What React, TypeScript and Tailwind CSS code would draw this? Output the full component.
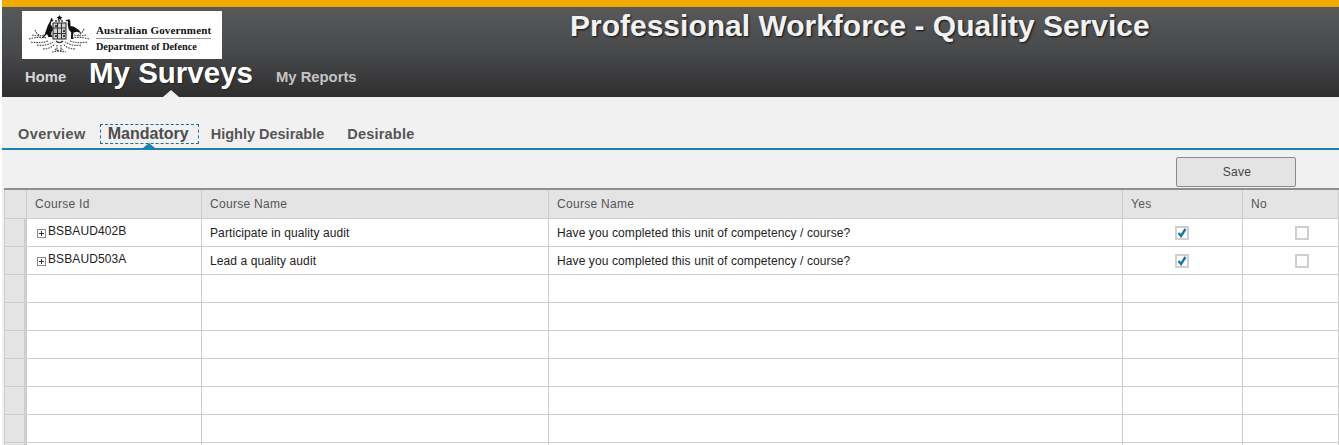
const font = "font-['Liberation_Sans',Arial,sans-serif]";

const rows = [
  { id: "BSBAUD402B", name: "Participate in quality audit", yes: true },
  { id: "BSBAUD503A", name: "Lead a quality audit", yes: true },
];
const emptyRows = [0, 1, 2, 3, 4, 5, 6];

function Crest() {
  return (
    <svg width="62" height="42" viewBox="0 0 62 42" className="shrink-0">
      <g fill="none" stroke="#444" strokeWidth="1.100" strokeDasharray="1.600 1">
        <path d="M1 25c6-2 12-2 18-1M4 21c4 1 8 1 12 0M7 16c1 3 3 5 6 6M3 28c6 1 11 1 17-1M9 31c6 1 11 0 16-3M15 35c5 0 9-2 12-5" />
        <path d="M61 25c-6-2-12-2-18-1M58 21c-4 1-8 1-12 0M56 15c-1 3-3 5-6 6M59 28c-6 1-11 1-17-1M53 31c-6 1-11 0-16-3M47 35c-5 0-9-2-12-5" />
        <path d="M24 38c4-1 10-1 14 0M27 35c2 2 6 2 8 0M29 31v6M33 31v6" />
      </g>
      <path d="M24 3.500l.6 2.200 1 1.300-2.200.6-.8 3 1.600 2.200 1 3-1.600 2-.4 2.700 1.600 2.500-4.400 0-1.400-3-3.500 3.500-2.500 1.200 3.500-4 1.500-4.200 2-5.500 2-3.500.8-2.500z" fill="#111" />
      <path d="M38.500 6l2.500-.8 1.200 1 .3 5.800 3.500.8 4.500 3 3 3.500-4.500-1.500-3.500.8-.8 5.400 1.200.9-3 0 .3-6.300-2.500-3-1-5.200.3-3.200-2.500-.3z" fill="#111" />
      <rect x="25" y="9" width="13" height="16" fill="#cfcfcf" stroke="#222" strokeWidth="1" />
      <path d="M25 14h13M25 19.500h13M29.500 9v16M33.500 9v16" stroke="#333" strokeWidth="1" />
      <path d="M27 12l2 0M35 17l2 0M27 22l2 0M35 22l2 0" stroke="#111" strokeWidth="1.500" />
      <path d="M31.500 1l1 1.800 1.800.4-1.300 1.200.3 1.800-1.800-.9-1.800.9.300-1.800-1.300-1.200 1.800-.4z" fill="#111" />
      <path d="M27 7h9" stroke="#333" strokeWidth="1.300" strokeDasharray="2 1" />
      <path d="M28 27c2 2 5 2 7 0" fill="none" stroke="#333" strokeWidth="1.500" />
    </svg>
  );
}

function Expander() {
  return (
    <svg width="9" height="9" viewBox="0 0 9 9" className="mt-[7px] shrink-0">
      <rect x="0.500" y="0.500" width="8" height="8" fill="#fff" stroke="#888" />
      <path d="M2 4.500h5M4.500 2v5" stroke="#333" />
    </svg>
  );
}

function Check({ checked }: { checked: boolean }) {
  return (
    <div className="flex size-[14px] items-center justify-center border-2 border-[#cfcfcf] bg-[#fdfdfd]">
      {checked && (
        <svg width="10" height="10" viewBox="0 0 10 10">
          <path d="M1.500 5l2.500 3 4.500-7" fill="none" stroke="#1f739f" strokeWidth="2.400" />
        </svg>
      )}
    </div>
  );
}

const cell = "border-r border-b border-[#cdcdcd]";
const rowGrid = "grid grid-cols-[23px_175px_347px_574px_120px_96px] h-[28px]";

export default function App() {
  return (
    <div className={`${font} h-[445px] w-[1339px] overflow-hidden bg-white pl-[2px]`}>
      <div className="h-[7px] bg-[#f0ab00]" />

      <header className="relative h-[90px] bg-gradient-to-b from-[#58595b] via-[#48494b] to-[#2f2f30] pt-[4px] pl-[20px]">
        <div className="flex h-[48px] w-[200px] items-center gap-[6px] bg-white pl-[6px]">
          <Crest />
          <div className="mt-[8px] font-['Liberation_Serif',serif] leading-none font-bold text-[#111]">
            <div className="border-b border-[#999] pb-[2px] text-[11px] tracking-[0.15px] whitespace-nowrap">Australian Government</div>
            <div className="pt-[3px] text-[10.200px] whitespace-nowrap">Department of Defence</div>
          </div>
        </div>
        <nav className="-mt-[1px] flex items-center pl-[3px] font-bold">
          <span className="w-[64px] pt-[8px] text-[14.800px] text-[#d6d6d6]">Home</span>
          <span className="w-[187px] text-[29.500px] leading-[30px] text-white [text-shadow:1px_1px_1px_#222]">My Surveys</span>
          <span className="pt-[8px] text-[14.800px] text-[#c4c4c4]">My Reports</span>
        </nav>
        <div className="absolute bottom-0 left-[161px] size-0 border-x-[8px] border-b-[7px] border-x-transparent border-b-[#f1f1f1]" />
        <h1 className="absolute top-[4px] left-[568px] text-[30px] leading-[30px] font-bold whitespace-nowrap text-[#f2f2f2] [text-shadow:1px_1px_2px_#111]">
          Professional Workforce - Quality Service
        </h1>
      </header>

      <div className="bg-[#f1f1f1]">
        <div className="relative flex h-[53px] items-end gap-[14px] border-b-2 border-[#1a82ad] pb-[4px] pl-[16px] text-[14.500px] font-bold text-[#555]">
          <span className="-mb-[2px] tracking-[0.4px]">Overview</span>
          <span className="mr-[-2px] flex h-[20px] w-[99px] items-center justify-center border border-dashed border-[#1a6f94] pr-[2px] text-[16px] text-[#4d4d4d]">
            Mandatory
          </span>
          <span className="-mb-[2px]">Highly Desirable</span>
          <span className="-mb-[2px] ml-[9px] tracking-[0.2px]">Desirable</span>
          <div className="absolute bottom-0 left-[141px] size-0 border-x-[6px] border-b-[5px] border-x-transparent border-b-[#1a82ad]" />
        </div>

        <div className="flex h-[38px] justify-end pt-[7px] pr-[43px]">
          <button className="h-[30px] w-[120px] rounded-[2px] border border-[#8a8a8a] bg-[#e4e4e4] pl-[2px] text-[12px] tracking-[0.3px] text-[#444]">
            Save
          </button>
        </div>
      </div>

      <div className="bg-[#f1f1f1] pl-[2px] text-[12px] tracking-[0.1px] text-[#222]">
        <div className={`${rowGrid} h-[31px] border-t-2 border-[#8f8f8f] bg-[#e4e4e4] tracking-[0.3px] text-[#555]`}>
          <div className={`${cell} border-l border-l-[#cdcdcd]`} />
          <div className={`${cell} flex items-center pl-[8px]`}>Course Id</div>
          <div className={`${cell} flex items-center pl-[8px]`}>Course Name</div>
          <div className={`${cell} flex items-center pl-[8px]`}>Course Name</div>
          <div className={`${cell} flex items-center pl-[8px]`}>Yes</div>
          <div className={`${cell} flex items-center pl-[8px]`}>No</div>
        </div>
        {rows.map((row) => (
          <div key={row.id} className={`${rowGrid} bg-white`}>
            <div className={`${cell} border-l border-l-[#cdcdcd] border-r-[3px] bg-[#e4e4e4]`} />
            <div className={`${cell} flex items-start gap-[2px] pt-[3px] pl-[10px]`}>
              <Expander />
              <span>{row.id}</span>
            </div>
            <div className={`${cell} flex items-center pl-[8px]`}>{row.name}</div>
            <div className={`${cell} flex items-center pl-[8px]`}>Have you completed this unit of competency / course?</div>
            <div className={`${cell} flex items-center justify-center pr-[2px]`}>
              <Check checked={row.yes} />
            </div>
            <div className={`${cell} flex items-center pl-[52px]`}>
              <Check checked={false} />
            </div>
          </div>
        ))}
        {emptyRows.map((i) => (
          <div key={i} className={`${rowGrid} bg-white`}>
            <div className={`${cell} border-l border-l-[#cdcdcd] border-r-[3px] bg-[#e4e4e4]`} />
            <div className={cell} />
            <div className={cell} />
            <div className={cell} />
            <div className={cell} />
            <div className={cell} />
          </div>
        ))}
      </div>
    </div>
  );
}
